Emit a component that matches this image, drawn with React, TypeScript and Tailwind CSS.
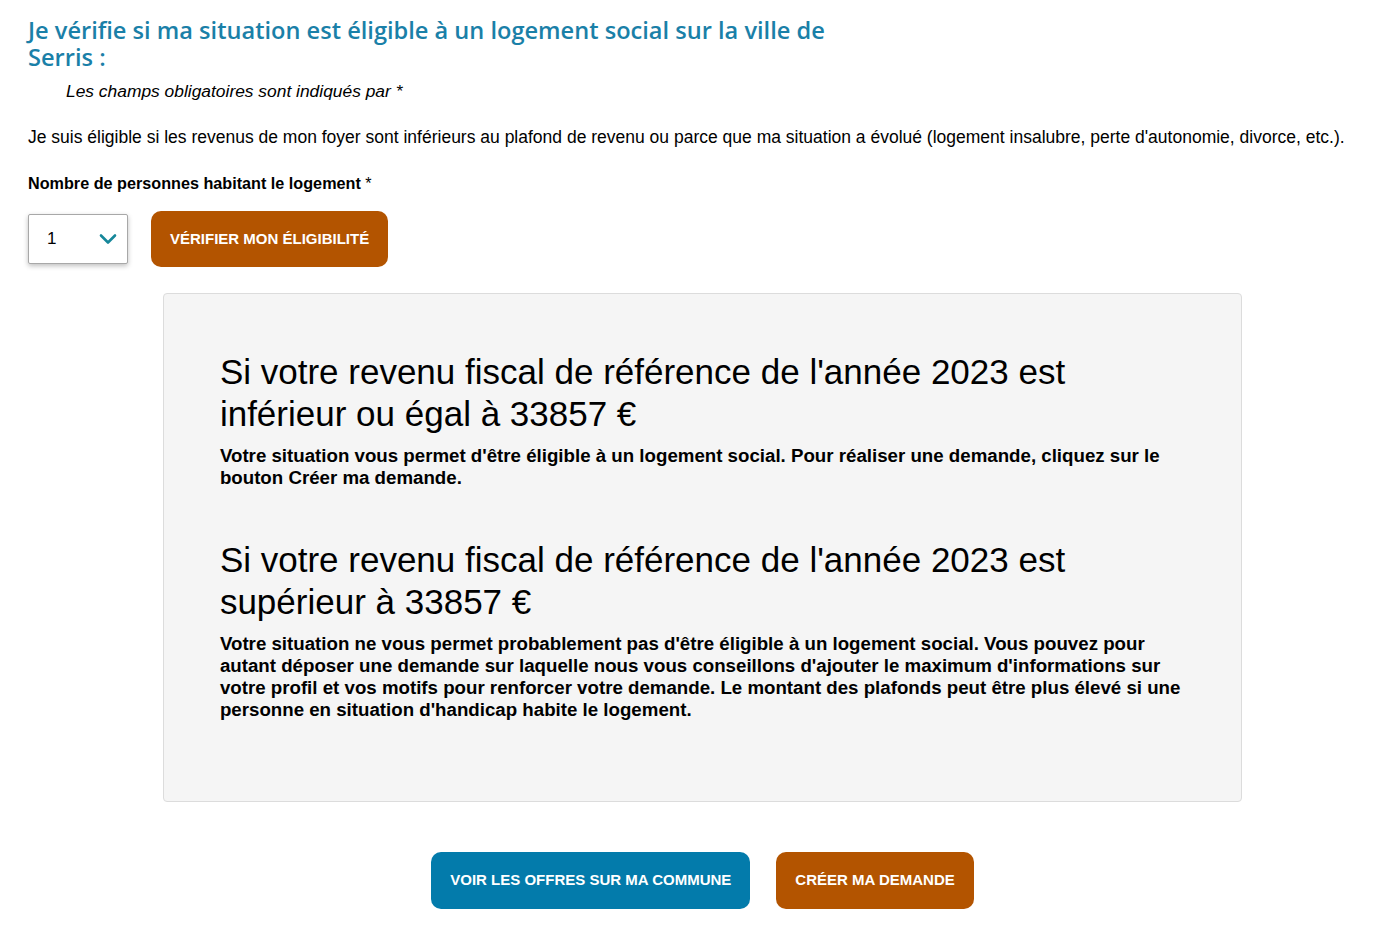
import React, { useState } from "react";

const App: React.FC = () => {
    const [count, setCount] = useState("1");

    return (
        <main className="min-h-screen bg-white pl-[28px] pr-[9px] pt-[17px] [font-family:'Liberation_Sans',Arial,sans-serif] text-black">
            {/* Title */}
            <h1 className="max-w-[820px] [font-family:'Open_Sans',sans-serif] font-semibold text-[23.6px] leading-[27px] text-[#1a80a8]">
                Je vérifie si ma situation est éligible à un logement social sur la ville de Serris :
            </h1>
            <p className="mt-[10px] pl-[38px] italic text-[17.4px] leading-[21px]">
                Les champs obligatoires sont indiqués par *
            </p>

            <p className="mt-[25px] text-[17.5px] leading-[21px]">
                Je suis éligible si les revenus de mon foyer sont inférieurs au plafond de revenu ou parce que ma situation a évolué (logement insalubre, perte d'autonomie, divorce, etc.).
            </p>

            {/* Form */}
            <label className="block mt-[25px] font-bold text-[16.2px] leading-[20px]">
                Nombre de personnes habitant le logement <span className="font-normal">*</span>
            </label>
            <div className="mt-[18px] flex items-center gap-[23px]">
                <div className="relative w-[100px] h-[50px] border border-[#a8a8a8] rounded-[2px] bg-white shadow-[0_2px_5px_rgba(0,0,0,0.25)]">
                    <select
                        value={count}
                        onChange={(e) => setCount(e.target.value)}
                        className="appearance-none w-full h-full bg-transparent pl-[18px] text-[17px] outline-none"
                    >
                        {["1", "2", "3", "4", "5", "6"].map((n) => (
                            <option key={n} value={n}>{n}</option>
                        ))}
                    </select>
                    <svg className="pointer-events-none absolute right-[10px] top-[18px]" width="18" height="12" viewBox="0 0 18 12" fill="none">
                        <path d="M2 2.5 L9 9.5 L16 2.5" stroke="#16879a" strokeWidth="2.6" strokeLinecap="round" strokeLinejoin="round" />
                    </svg>
                </div>
                <button className="h-[56px] px-[19px] rounded-[10px] bg-[#b35400] text-white font-bold text-[15px] uppercase">
                    Vérifier mon éligibilité
                </button>
            </div>

            {/* Result card */}
            <div className="mt-[26px] mx-auto w-4/5 bg-[#f5f5f5] border border-[#dcdcdc] rounded-[4px] pl-[56px] pr-[56px] pt-[57px] pb-[80px]">
                <h2 className="text-[35px] leading-[42px]">
                    Si votre revenu fiscal de référence de l'année 2023 est inférieur ou égal à 33857 €
                </h2>
                <p className="mt-[10px] font-bold text-[18.7px] leading-[22px]">
                    Votre situation vous permet d'être éligible à un logement social. Pour réaliser une demande, cliquez sur le bouton Créer ma demande.
                </p>

                <h2 className="mt-[50px] text-[35px] leading-[42px]">
                    Si votre revenu fiscal de référence de l'année 2023 est supérieur à 33857 €
                </h2>
                <p className="mt-[10px] font-bold text-[18.7px] leading-[22px]">
                    Votre situation ne vous permet probablement pas d'être éligible à un logement social. Vous pouvez pour autant déposer une demande sur laquelle nous vous conseillons d'ajouter le maximum d'informations sur votre profil et vos motifs pour renforcer votre demande. Le montant des plafonds peut être plus élevé si une personne en situation d'handicap habite le logement.
                </p>
            </div>

            {/* Actions */}
            <div className="mt-[50px] flex justify-center gap-[26px]">
                <button className="h-[57px] px-[19px] rounded-[10px] bg-[#037bab] text-white font-bold text-[15px] uppercase">
                    Voir les offres sur ma commune
                </button>
                <button className="h-[57px] px-[19px] rounded-[10px] bg-[#b35400] text-white font-bold text-[15px] uppercase">
                    Créer ma demande
                </button>
            </div>
        </main>
    );
};

export default App;
